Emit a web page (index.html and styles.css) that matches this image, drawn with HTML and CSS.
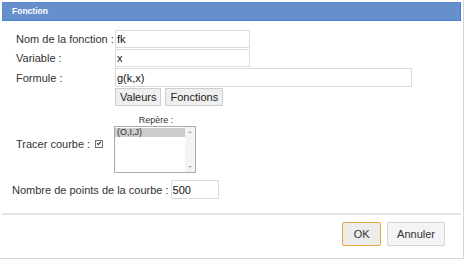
FILE: index.html
```html
<!DOCTYPE html>
<html lang="fr">
<head>
    <meta charset="UTF-8">
    <title>Fonction</title>
    <link rel="stylesheet" href="styles.css">
</head>
<body>
<div class="dialog">
    <div class="dialog-title">Fonction</div>

    <div class="dialog-body">
        <div class="row">
            <label class="field-label" for="nom">Nom de la fonction :</label>
            <input type="text" id="nom" class="field short" value="fk">
        </div>
        <div class="row">
            <label class="field-label" for="variable">Variable :</label>
            <input type="text" id="variable" class="field short" value="x">
        </div>
        <div class="row">
            <label class="field-label" for="formule">Formule :</label>
            <input type="text" id="formule" class="field long" value="g(k,x)">
        </div>
        <div class="row tools">
            <span class="field-label"></span>
            <button type="button" class="small-btn">Valeurs</button>
            <button type="button" class="small-btn">Fonctions</button>
        </div>

        <div class="row courbe">
            <label class="field-label">Tracer courbe : <span class="check"></span></label>
            <div class="repere">
                <div class="repere-title">Repère :</div>
                <div class="listbox">
                    <div class="list-items">
                        <div class="list-item selected">(O,I,J)</div>
                    </div>
                    <div class="scroll">
                        <span class="arrow up"></span>
                        <span class="arrow down"></span>
                    </div>
                </div>
            </div>
        </div>

        <div class="row points">
            <label for="points">Nombre de points de la courbe :</label>
            <input type="text" id="points" class="field tiny" value="500">
        </div>
    </div>

    <div class="dialog-footer">
        <button type="button" class="btn btn-ok">OK</button>
        <button type="button" class="btn">Annuler</button>
    </div>
</div>
</body>
</html>
```

FILE: styles.css
```css
body {
    margin: 0;
    font-family: 'Liberation Sans', Arial, sans-serif;
    font-size: 11px;
    color: #333;
    background: #fff;
}

.dialog {
    width: 463px;
    height: 258px;
    border-right: 1px solid #d6d6d6;
    border-bottom: 1px solid #d6d6d6;
    display: flex;
    flex-direction: column;
}

.dialog-title {
    margin: 2px 2px 0 2px;
    height: 17px;
    background: #6590cc;
    border: 1px solid #5b8bd4;
    border-right-color: #3f7be0;
    border-bottom-color: #4a83dc;
    color: #fff;
    font-size: 8.5px;
    font-weight: bold;
    line-height: 17px;
    padding-left: 9px;
}

.dialog-body {
    padding: 9px 0 0 16px;
    flex: 1;
}

.row {
    display: flex;
    align-items: center;
    margin-bottom: 1px;
    white-space: nowrap;
}

.field-label {
    width: 99px;
    flex: none;
}

.field {
    font: inherit;
    color: #111;
    height: 18px;
    box-sizing: border-box;
    border: 1px solid #dcdcdc;
    padding: 0 1px;
    margin: 0;
    outline: none;
}

.short { width: 135px; }
.long { width: 297px; height: 19px; }
.tiny { width: 48px; height: 19px; }

.small-btn {
    font: inherit;
    color: #222;
    height: 18px;
    padding: 0 4px;
    margin-right: 4px;
    background: #efefef;
    border: 1px solid #cfcfcf;
    border-radius: 0;
}

.courbe {
    margin-top: 9px;
}

.check {
    display: inline-block;
    width: 6px;
    height: 6px;
    margin-left: 2px;
    border: 1px solid #777;
    background: #f4f4f4;
    position: relative;
}

.check::after {
    content: "";
    position: absolute;
    left: 2px;
    top: 0;
    width: 1px;
    height: 3px;
    border: solid #222;
    border-width: 0 1px 1px 0;
    transform: rotate(45deg);
}

.repere-title {
    font-size: 9px;
    line-height: 10px;
    text-align: center;
    width: 82px;
    margin-bottom: 1px;
}

.listbox {
    width: 80px;
    height: 45px;
    border: 1px solid #aaa;
    display: flex;
    margin-left: -1px;
}

.list-items {
    flex: 1;
    padding-top: 1px;
}

.list-item {
    font-size: 9px;
    line-height: 9px;
    padding-left: 2px;
    color: #333;
}

.selected { background: #cdcdcd; }

.scroll {
    width: 10px;
    background: #f3f3f3;
    display: flex;
    flex-direction: column;
    justify-content: space-between;
    align-items: center;
    padding: 4px 0;
}

.arrow {
    width: 0;
    height: 0;
    border-left: 2px solid transparent;
    border-right: 2px solid transparent;
}

.arrow.up { border-bottom: 2px solid #b0b0b0; }
.arrow.down { border-top: 2px solid #b0b0b0; }

.points {
    margin-top: 7px;
    margin-left: -4px;
}

.points label {
    margin-right: 2px;
}

.dialog-footer {
    margin: 0 2px;
    border-top: 2px solid #e6e6e6;
    height: 45px;
    display: flex;
    justify-content: flex-end;
    align-items: flex-start;
    gap: 6px;
    padding-top: 7px;
    padding-right: 16px;
    box-sizing: border-box;
}

.btn {
    font: inherit;
    color: #333;
    height: 24px;
    padding: 0 9px;
    background: #f4f4f4;
    border: 1px solid #d3d3d3;
    border-radius: 2px;
}

.btn-ok {
    width: 39px;
    background: #ececec;
    border-color: #e5a83a;
}
```
